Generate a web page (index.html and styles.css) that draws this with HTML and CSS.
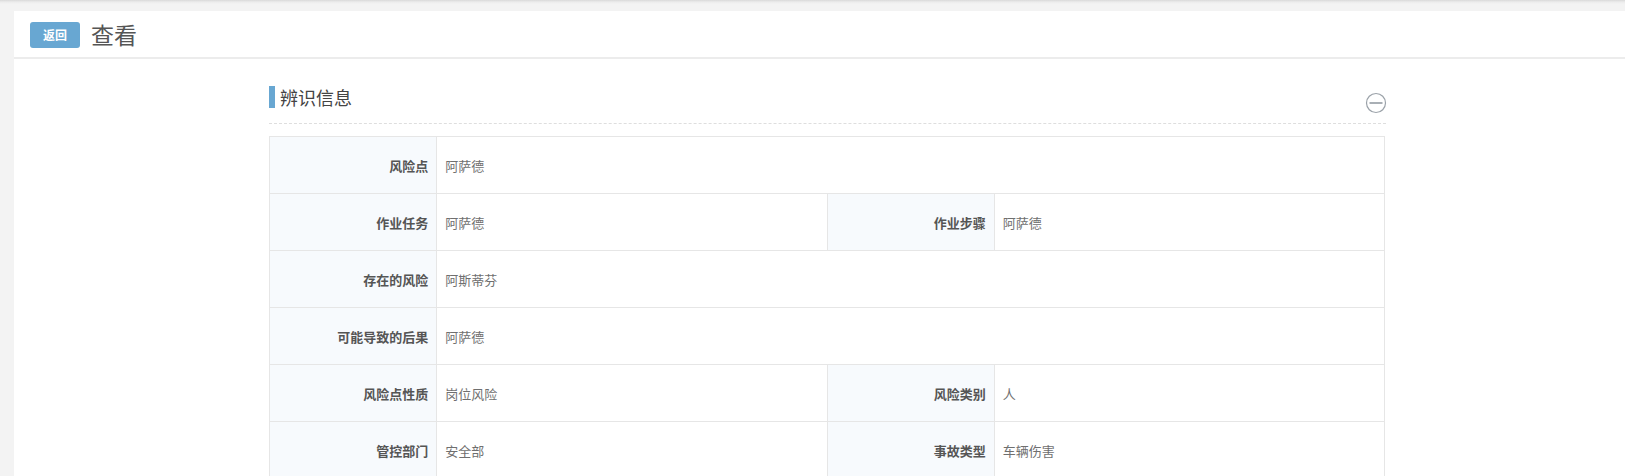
FILE: index.html
```html
<!DOCTYPE html>
<html lang="zh-CN">
<head>
<meta charset="utf-8">
<title>查看</title>
<link rel="stylesheet" href="styles.css">
</head>
<body>
<div class="panel">
  <div class="panel-header">
    <button class="btn-back">返回</button>
    <h1 class="page-title">查看</h1>
  </div>
  <div class="content">
    <div class="section-head">
      <span class="section-bar"></span>
      <span class="section-title">辨识信息</span>
      <svg class="collapse-icon" width="22" height="22" viewBox="0 0 22 22">
        <circle cx="11" cy="11" r="9.5" fill="none" stroke="#9ba2a9" stroke-width="1.2"/>
        <rect x="4.5" y="10" width="13" height="2" fill="#a9afb5"/>
      </svg>
    </div>
    <table class="info-table">
      <colgroup>
        <col class="c-label"><col class="c-value"><col class="c-label"><col class="c-value">
      </colgroup>
      <tr><th>风险点</th><td colspan="3">阿萨德</td></tr>
      <tr><th>作业任务</th><td>阿萨德</td><th>作业步骤</th><td>阿萨德</td></tr>
      <tr><th>存在的风险</th><td colspan="3">阿斯蒂芬</td></tr>
      <tr><th>可能导致的后果</th><td colspan="3">阿萨德</td></tr>
      <tr><th>风险点性质</th><td>岗位风险</td><th>风险类别</th><td>人</td></tr>
      <tr><th>管控部门</th><td>安全部</td><th>事故类型</th><td>车辆伤害</td></tr>
    </table>
  </div>
</div>
</body>
</html>
```

FILE: styles.css
```css
html {
  background: linear-gradient(#d9d9d9 0, #ececec 2px, #f3f3f3 4px, #f3f3f3 100%);
  min-height: 100%;
}
body {
  margin: 0;
  padding: 11px 0 0 14px;
  font-family: "Noto Sans CJK SC", "Noto Sans", sans-serif;
  color: #555;
  overflow: hidden;
}
.panel {
  background: #fff;
  min-height: 600px;
}
.panel-header {
  display: flex;
  align-items: center;
  height: 46px;
  padding-left: 16px;
  border-bottom: 2px solid #ececec;
}
.btn-back {
  width: 50px;
  height: 26px;
  margin-top: 1px;
  border: none;
  border-radius: 3px;
  background: #68a7d2;
  color: #fff;
  font-family: inherit;
  font-size: 12px;
  font-weight: bold;
  padding: 0;
  line-height: 26px;
}
.page-title {
  margin: 0 0 0 11px;
  font-size: 23px;
  font-weight: normal;
  color: #555;
  line-height: 30px;
}
.content {
  width: 1117px;
  margin-left: 255px;
  padding-top: 27px;
}
.section-head {
  display: flex;
  align-items: flex-start;
  padding-bottom: 9px;
  border-bottom: 1px dashed #dedede;
}
.section-bar {
  width: 6px;
  height: 22px;
  background: #68a7d2;
}
.section-title {
  margin-left: 5px;
  font-size: 18px;
  line-height: 22px;
  color: #444;
}
.collapse-icon {
  margin-left: auto;
  margin-top: 6px;
  margin-right: -1px;
}
.info-table {
  width: 1116px;
  margin-top: 12px;
  border-collapse: collapse;
  table-layout: fixed;
  font-size: 13px;
}
.c-label { width: 15%; }
.c-value { width: 35%; }
.info-table th,
.info-table td {
  border: 1px solid #e6e6e6;
  height: 57px;
  padding: 0 8px;
  box-sizing: border-box;
}
.info-table th {
  background: #f7fafd;
  text-align: right;
  font-weight: bold;
  color: #555;
}
.info-table td {
  text-align: left;
  color: #6f6f6f;
}
```
